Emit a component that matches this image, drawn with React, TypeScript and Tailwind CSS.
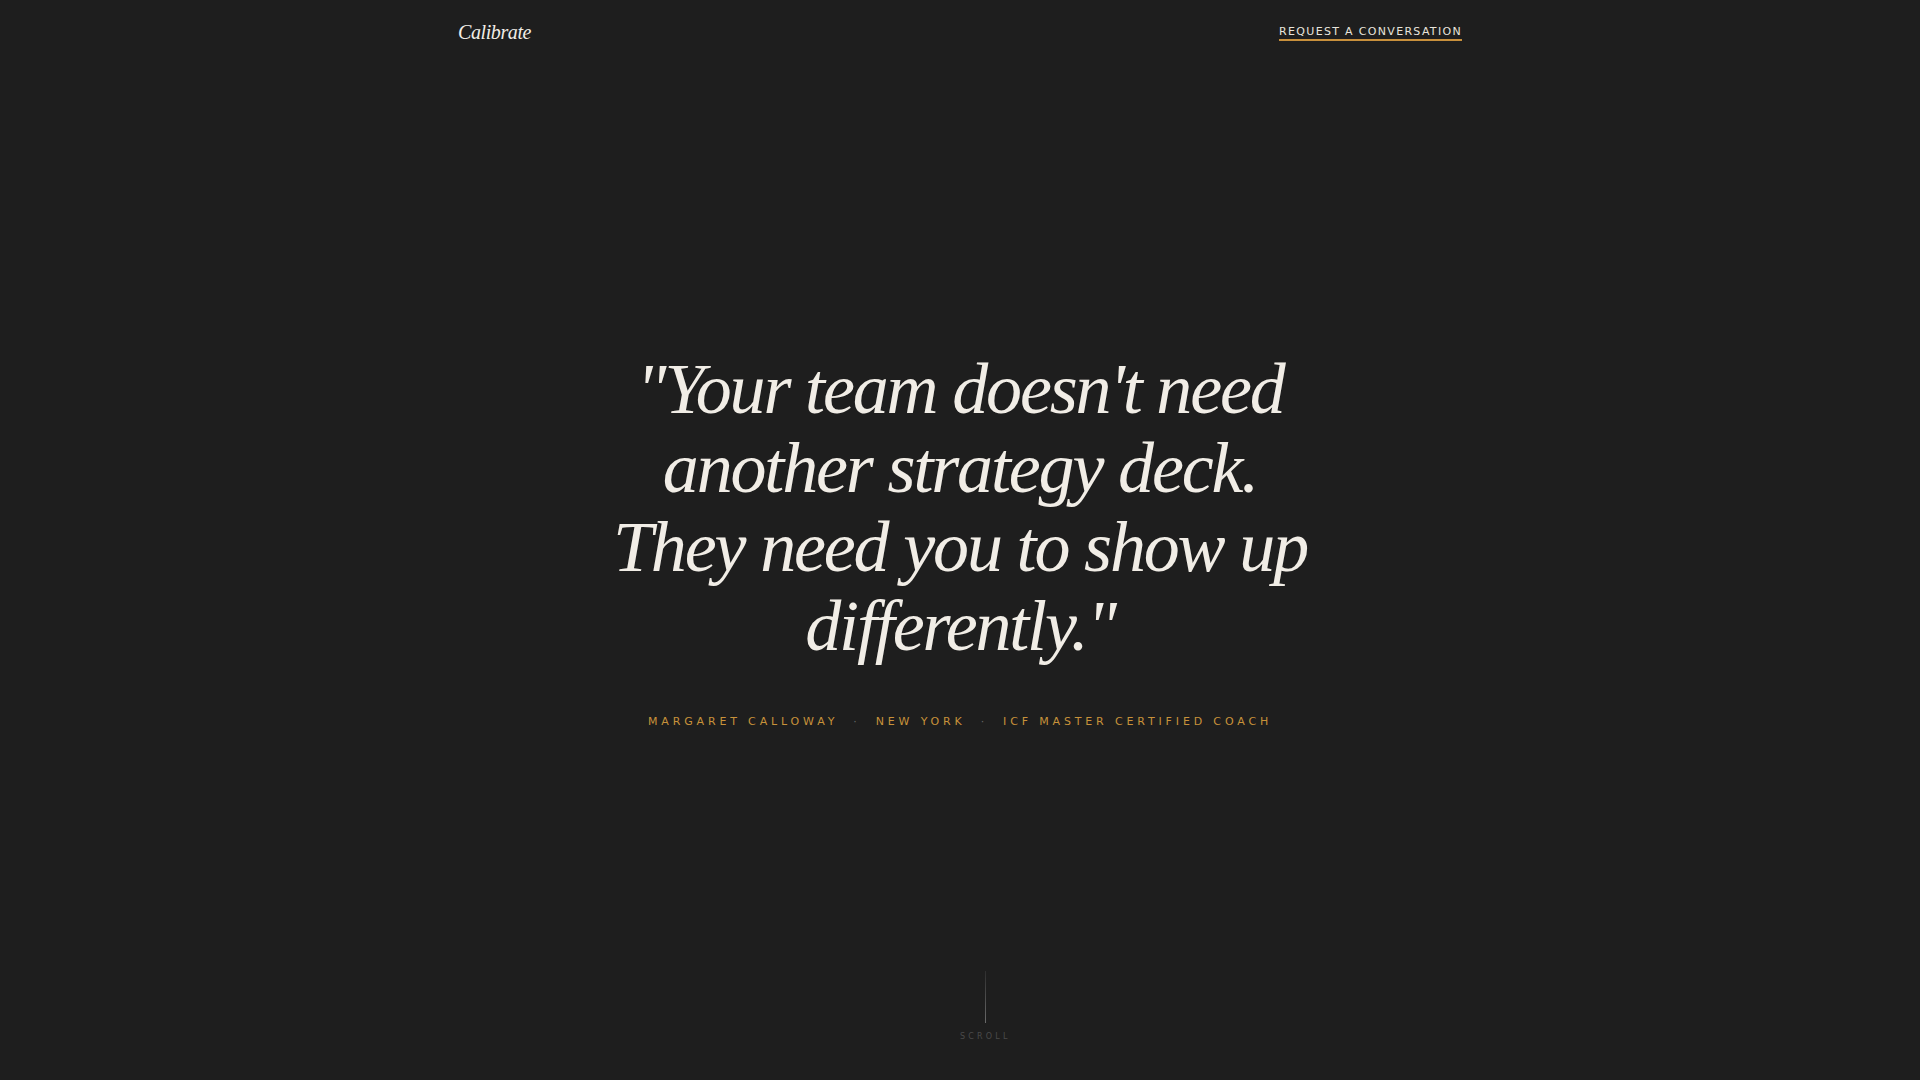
export default function App() {
  return (
    <div className="relative min-h-screen bg-[#1e1e1e] text-[#f1ede6]">
      {/* Header */}
      <header className="absolute inset-x-0 top-0 z-10">
        <div className="mx-auto flex h-16 max-w-[1004px] items-center justify-between">
          <a
            href="#"
            className="text-[20px] italic tracking-[-0.02em] text-[#f1ede6] [font-family:'Liberation_Serif',serif]"
          >
            Calibrate
          </a>
          <a
            href="#"
            className="mt-[3px] border-b-2 border-[#c8903c] pb-[2px] text-[11px] leading-none tracking-[0.12em] text-[#e8e4dc] [font-family:'DejaVu_Sans',sans-serif]"
          >
            REQUEST A CONVERSATION
          </a>
        </div>
      </header>

      {/* Hero */}
      <section className="flex min-h-screen flex-col items-center justify-center px-6 text-center">
        <blockquote className="max-w-[720px] text-[72px] leading-[1.1] italic tracking-[-0.03em] text-[#f1ede6] [font-family:'Liberation_Serif',serif]">
          "Your team doesn't need another strategy deck. They need you to show up differently."
        </blockquote>
        <p className="mt-[47px] text-[11px] uppercase tracking-[0.35em] text-[#c8923a] [font-family:'DejaVu_Sans',sans-serif]">
          Margaret Calloway
          <span className="mx-[15px] text-[#666666]">·</span>
          New York
          <span className="mx-[15px] text-[#666666]">·</span>
          ICF Master Certified Coach
        </p>
      </section>

      {/* Scroll hint */}
      <div className="absolute bottom-[37px] left-1/2 flex flex-col items-center gap-2">
        <div className="h-[52px] w-px bg-gradient-to-b from-[#2e2e2e] to-[#6a6a6a]" />
        <span className="text-[8px] tracking-[0.4em] text-[#4a4a4a] [font-family:'DejaVu_Sans',sans-serif]">
          SCROLL
        </span>
      </div>
    </div>
  );
}
